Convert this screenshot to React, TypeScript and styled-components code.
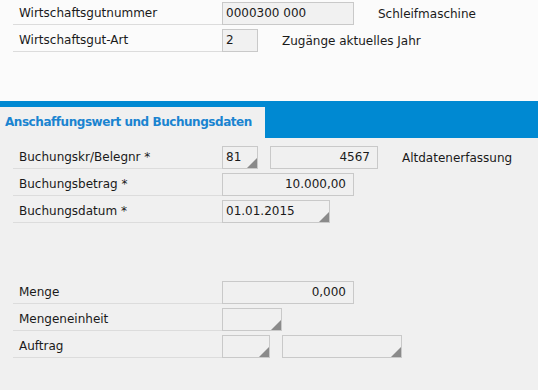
import styled, { createGlobalStyle } from 'styled-components';

const GlobalStyle = createGlobalStyle`
  html, body {
    margin: 0;
    padding: 0;
    background: #f0f0f0;
  }
  body {
    font-family: 'DejaVu Sans', Verdana, sans-serif;
    font-size: 12px;
    color: #1a1a1a;
  }
`;

const Screen = styled.div`
  width: 538px;
  height: 390px;
  overflow: hidden;
  display: flex;
  flex-direction: column;
`;

const Header = styled.section`
  background: #fbfbfb;
  height: 101px;
  overflow: hidden;
`;

const Form = styled.div<{ $offset?: number }>`
  display: flex;
  flex-direction: column;
  margin-top: ${(p) => p.$offset ?? 0}px;
`;

const Row = styled.div`
  display: flex;
  align-items: flex-end;
  height: 27px;
  padding-left: 13px;
`;

const Label = styled.div`
  width: 209px;
  box-sizing: border-box;
  height: 23px;
  line-height: 23px;
  padding-left: 6px;
  border-bottom: 1px solid #dcdcdc;
  white-space: nowrap;
`;

const Fields = styled.div`
  display: flex;
  align-items: center;
  gap: 12px;
  height: 23px;
`;

const Field = styled.div<{ $w: number; $right?: boolean; $help?: boolean; $bg?: string }>`
  position: relative;
  box-sizing: border-box;
  width: ${(p) => p.$w}px;
  height: 23px;
  line-height: 21px;
  border: 1px solid #c9c9c9;
  background: ${(p) => p.$bg ?? '#f0f0f0'};
  padding: 0 7px 0 3px;
  text-align: ${(p) => (p.$right ? 'right' : 'left')};
  white-space: nowrap;
  &::after {
    content: '';
    display: ${(p) => (p.$help ? 'block' : 'none')};
    position: absolute;
    right: 0;
    bottom: 0;
    width: 10px;
    height: 10px;
    background: linear-gradient(135deg, transparent 48%, #8a8a8a 52%);
  }
`;

const Note = styled.span`
  margin-left: 12px;
  white-space: nowrap;
`;

const TabBar = styled.div`
  background: #0089d2;
  padding-top: 6px;
  height: 31px;
  display: flex;
`;

const Tab = styled.div`
  width: 265px;
  background: #f0f0f0;
  color: #1a84d0;
  font-weight: bold;
  letter-spacing: -0.45px;
  line-height: 31px;
  padding-left: 5px;
  box-sizing: border-box;
  white-space: nowrap;
  overflow: hidden;
`;

const Body = styled.section`
  flex: 1;
  background: #f0f0f0;
  padding-top: 4px;
`;

const Spacer = styled.div`
  height: 54px;
`;

export default function App() {
  return (
    <Screen>
      <GlobalStyle />
      <Header>
        <Form $offset={-2}>
          <Row>
            <Label>Wirtschaftsgutnummer</Label>
            <Fields>
              <Field $w={132} $bg="#f1f1f1">0000300 000</Field>
              <Note>Schleifmaschine</Note>
            </Fields>
          </Row>
          <Row>
            <Label>Wirtschaftsgut-Art</Label>
            <Fields>
              <Field $w={36} $bg="#f1f1f1">2</Field>
              <Note>Zugänge aktuelles Jahr</Note>
            </Fields>
          </Row>
        </Form>
      </Header>
      <TabBar>
        <Tab>Anschaffungswert und Buchungsdaten</Tab>
      </TabBar>
      <Body>
        <Form>
          <Row>
            <Label>Buchungskr/Belegnr *</Label>
            <Fields>
              <Field $w={36} $help>81</Field>
              <Field $w={108} $right>4567</Field>
              <Note>Altdatenerfassung</Note>
            </Fields>
          </Row>
          <Row>
            <Label>Buchungsbetrag *</Label>
            <Fields>
              <Field $w={132} $right>10.000,00</Field>
            </Fields>
          </Row>
          <Row>
            <Label>Buchungsdatum *</Label>
            <Fields>
              <Field $w={108} $help>01.01.2015</Field>
            </Fields>
          </Row>
          <Spacer />
          <Row>
            <Label>Menge</Label>
            <Fields>
              <Field $w={132} $right>0,000</Field>
            </Fields>
          </Row>
          <Row>
            <Label>Mengeneinheit</Label>
            <Fields>
              <Field $w={60} $help />
            </Fields>
          </Row>
          <Row>
            <Label>Auftrag</Label>
            <Fields>
              <Field $w={48} $help />
              <Field $w={120} $help />
            </Fields>
          </Row>
        </Form>
      </Body>
    </Screen>
  );
}
